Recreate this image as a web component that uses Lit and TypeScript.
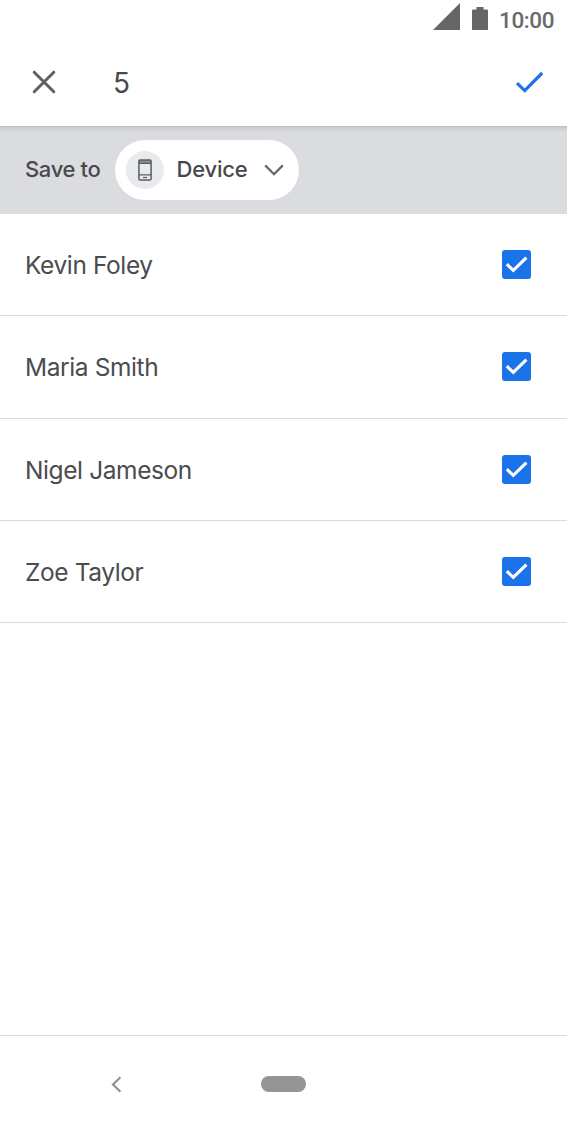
import { LitElement, html, css } from "lit";
import { customElement, property } from "lit/decorators.js";

@customElement("contact-row")
class ContactRow extends LitElement {
  @property() name = "";

  static styles = css`
    :host {
      display: flex;
      align-items: center;
      justify-content: space-between;
      box-sizing: border-box;
      padding: 0 36px 0 25px;
      border-bottom: 1px solid #dadadb;
      color: #4a4c50;
    }
    .name {
      padding-top: 1px;
      font-size: 24.5px;
      line-height: 32px;
      letter-spacing: -0.4px;
      white-space: nowrap;
    }
    svg {
      display: block;
    }
  `;

  render() {
    return html`
      <span class="name">${this.name}</span>
      <svg width="29" height="29" viewBox="0 0 29 29">
        <rect width="29" height="29" rx="3" fill="#1a73e8" />
        <path d="M4.8 14.2 11.3 20.4 24.4 7.6" fill="none" stroke="#fff" stroke-width="3.2" />
      </svg>
    `;
  }
}

@customElement("app-root")
class AppRoot extends LitElement {
  contacts = ["Kevin Foley", "Maria Smith", "Nigel Jameson", "Zoe Taylor"];

  static styles = css`
    :host {
      display: flex;
      flex-direction: column;
      height: 1134px;
      background: #fff;
      color: #47494d;
      font-family: Inter, Roboto, sans-serif;
      overflow: hidden;
    }
    svg {
      display: block;
    }
    .status {
      display: flex;
      align-items: flex-start;
      height: 40px;
      padding-left: 433px;
      color: #6a6a6a;
    }
    .signal {
      margin-top: 3px;
    }
    .battery {
      margin: 7px 0 0 12px;
    }
    .time {
      margin: 6px 0 0 11px;
      font: 500 22.5px/28px Roboto, sans-serif;
      letter-spacing: -0.4px;
    }
    .toolbar {
      display: flex;
      align-items: center;
      height: 86px;
      box-sizing: border-box;
      padding: 0 23px 2px 32px;
    }
    .count {
      flex: 1;
      padding-top: 2px;
      margin-left: 57px;
      font-size: 28px;
      line-height: 34px;
    }
    .save {
      display: flex;
      align-items: center;
      height: 88px;
      box-sizing: border-box;
      padding-left: 25px;
      background: linear-gradient(#bcbdc0, #cdced1 2px, #dadce0 6px);
      font-size: 22px;
      font-weight: 500;
    }
    .label {
      width: 90px;
      padding-bottom: 2px;
      letter-spacing: -0.35px;
      white-space: nowrap;
    }
    .chip {
      display: flex;
      align-items: center;
      width: 184.4px;
      height: 60px;
      box-sizing: border-box;
      padding-left: 11px;
      border-radius: 30px;
      background: #fff;
    }
    .avatar {
      display: flex;
      align-items: center;
      justify-content: center;
      width: 38px;
      height: 38px;
      border-radius: 50%;
      background: #e8eaed;
    }
    .device {
      width: 87.5px;
      padding-bottom: 2px;
      margin-left: 12.5px;
      letter-spacing: -0.2px;
    }
    .list {
      display: grid;
      grid-template-rows: repeat(4, 102.3px);
      flex: 1;
      align-content: start;
    }
    .nav {
      display: flex;
      align-items: center;
      height: 99px;
      box-sizing: border-box;
      padding: 0 0 2px 110px;
      border-top: 1px solid #dcdcdc;
    }
    .pill {
      width: 44.5px;
      height: 16px;
      margin-left: 139px;
      border-radius: 8px;
      background: #959595;
    }
  `;

  render() {
    return html`
      <div class="status">
        <svg class="signal" width="27" height="27" viewBox="0 0 27 27"><path d="M27 0V27H0Z" fill="#666" /></svg>
        <svg class="battery" width="16" height="23" viewBox="0 0 16 23">
          <path d="M4.5 0h7v2.5H15Q16 2.5 16 3.5V22.2Q16 23 15.2 23H.8Q0 23 0 22.2V3.5Q0 2.5 1 2.5h3.5Z" fill="#666" />
        </svg>
        <span class="time">10:00</span>
      </div>
      <div class="toolbar">
        <svg width="24" height="24" viewBox="0 0 24 24">
          <path d="M2.2 2.2 21.8 21.8M21.8 2.2 2.2 21.8" fill="none" stroke="#5f6165" stroke-width="3" stroke-linecap="round" />
        </svg>
        <span class="count">5</span>
        <svg width="29" height="24" viewBox="0 0 29 24">
          <path d="M2 13.2 9.7 20.6 27.2 3" fill="none" stroke="#1a73e8" stroke-width="3.2" />
        </svg>
      </div>
      <div class="save">
        <span class="label">Save to</span>
        <div class="chip">
          <span class="avatar">
            <svg width="14" height="22" viewBox="0 0 14 22">
              <rect x="1" y="1" width="12" height="3.4" fill="#8c8e92" />
              <path d="M1 4.4h12M1 15.8h12" stroke="#5c5e62" stroke-width="1.2" />
              <rect x=".9" y=".9" width="12.2" height="20" rx="1.2" fill="none" stroke="#5c5e62" stroke-width="1.5" />
              <path d="M5 18.5h4" stroke="#5c5e62" stroke-width="1.2" />
            </svg>
          </span>
          <span class="device">Device</span>
          <svg width="20" height="12" viewBox="0 0 20 12">
            <path d="M1.2 1.4 10 10.2 18.8 1.4" fill="none" stroke="#66686c" stroke-width="2.3" />
          </svg>
        </div>
      </div>
      <div class="list">
        ${this.contacts.map((c) => html`<contact-row .name=${c}></contact-row>`)}
      </div>
      <div class="nav">
        <svg width="12" height="17" viewBox="0 0 12 17">
          <path d="M10.4 1.3 3 8.5 10.4 15.7" fill="none" stroke="#929292" stroke-width="2.2" />
        </svg>
        <span class="pill"></span>
      </div>
    `;
  }
}
